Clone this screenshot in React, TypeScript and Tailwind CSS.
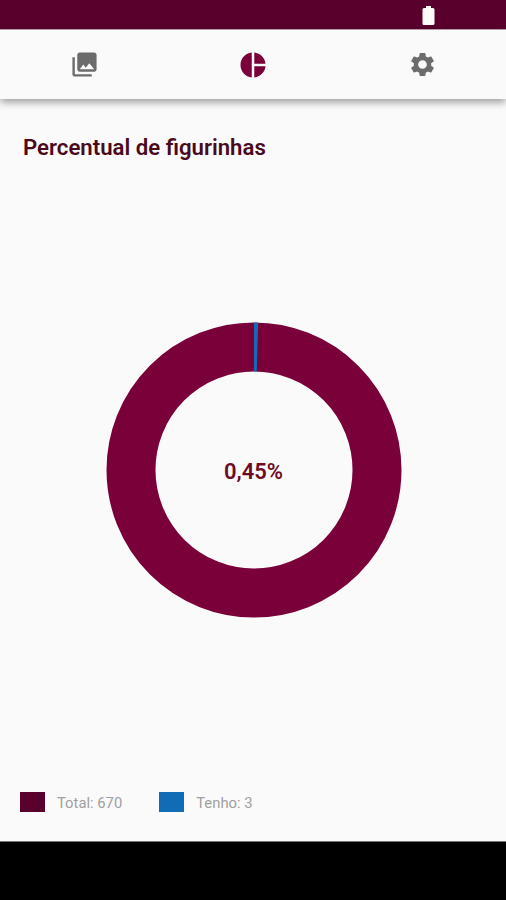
import React from 'react';
import { MdPhotoLibrary, MdPieChart, MdSettings } from 'react-icons/md';

const TOTAL = 670;
const OWNED = 3;

const CENTER = 148;
const OUTER = 147.5;
const INNER = 98.5;

const point = (radius: number, angle: number) =>
  `${CENTER + radius * Math.sin(angle)} ${CENTER - radius * Math.cos(angle)}`;

const StatusBar: React.FC = () => (
  <div className="flex h-[29px] shrink-0 justify-end bg-[#5a002c] pt-[6px] pr-[71px]">
    <svg width="13" height="19" viewBox="0 0 13 19" fill="#fffdf8">
      <path d="M4 0h5v2h2q1.500 0 1.500 1.500v14q0 1.500-1.500 1.500h-9q-1.500 0-1.500-1.500v-14q0-1.500 1.500-1.500h2z" />
    </svg>
  </div>
);

const TabBar: React.FC = () => (
  <nav className="z-10 grid h-[70px] shrink-0 grid-cols-3 place-items-center border-t border-[#b799a8] bg-[#fafafa] shadow-[0_3px_8px_rgba(0,0,0,0.4)]">
    <button aria-label="Figurinhas" className="text-[#6c6c6c]">
      <MdPhotoLibrary size={29} />
    </button>
    <button aria-label="Percentual" className="pl-px text-[#7a003a]">
      <MdPieChart size={30} />
    </button>
    <button aria-label="Ajustes" className="pl-[2px] text-[#6c6c6c]">
      <MdSettings size={29} />
    </button>
  </nav>
);

const DonutChart: React.FC<{ value: number; total: number }> = ({ value, total }) => {
  const angle = (value / total) * Math.PI * 2;
  const slice = `M${point(INNER, 0)} L${point(OUTER, 0)} A${OUTER} ${OUTER} 0 0 1 ${point(OUTER, angle)} L${point(INNER, angle)} A${INNER} ${INNER} 0 0 0 ${point(INNER, 0)}Z`;
  const percent = ((value / total) * 100).toFixed(2).replace('.', ',');

  return (
    <div className="grid place-items-center">
      <svg width="296" height="296" viewBox="0 0 296 296" className="col-start-1 row-start-1">
        <circle
          cx={CENTER}
          cy={CENTER}
          r={(OUTER + INNER) / 2}
          fill="none"
          stroke="#7a003a"
          strokeWidth={OUTER - INNER}
        />
        <path d={slice} fill="#126cb5" />
      </svg>
      <span className="col-start-1 row-start-1 pt-[3px] text-[22px] leading-none font-semibold text-[#6e0a24]">
        {percent}%
      </span>
    </div>
  );
};

const LegendItem: React.FC<{ label: string; colorClass: string }> = ({ label, colorClass }) => (
  <div className="flex items-start gap-3">
    <span className={`h-5 w-[25px] ${colorClass}`} />
    <span className="pt-px text-[14.8px] leading-5 text-[#a0a0a0]">{label}</span>
  </div>
);

export default function App() {
  return (
    <div className="flex h-[900px] w-[506px] flex-col overflow-hidden bg-[#fafafa] font-['Roboto',sans-serif]">
      <StatusBar />
      <TabBar />
      <main className="flex flex-1 flex-col">
        <h1 className="h-[63px] pt-[32px] pl-[23px] text-[22.2px] leading-8 font-semibold text-[#4a0a1c]">
          Percentual de figurinhas
        </h1>
        <div className="flex flex-1 items-start justify-center pt-[160px] pl-px">
          <DonutChart value={OWNED} total={TOTAL} />
        </div>
        <div className="flex h-[49px] items-start gap-[37px] pl-5">
          <LegendItem label={`Total: ${TOTAL}`} colorClass="bg-[#5a002c]" />
          <LegendItem label={`Tenho: ${OWNED}`} colorClass="bg-[#126cb5]" />
        </div>
      </main>
      <div className="h-[59px] shrink-0 border-t border-[#777777] bg-black" />
    </div>
  );
}
